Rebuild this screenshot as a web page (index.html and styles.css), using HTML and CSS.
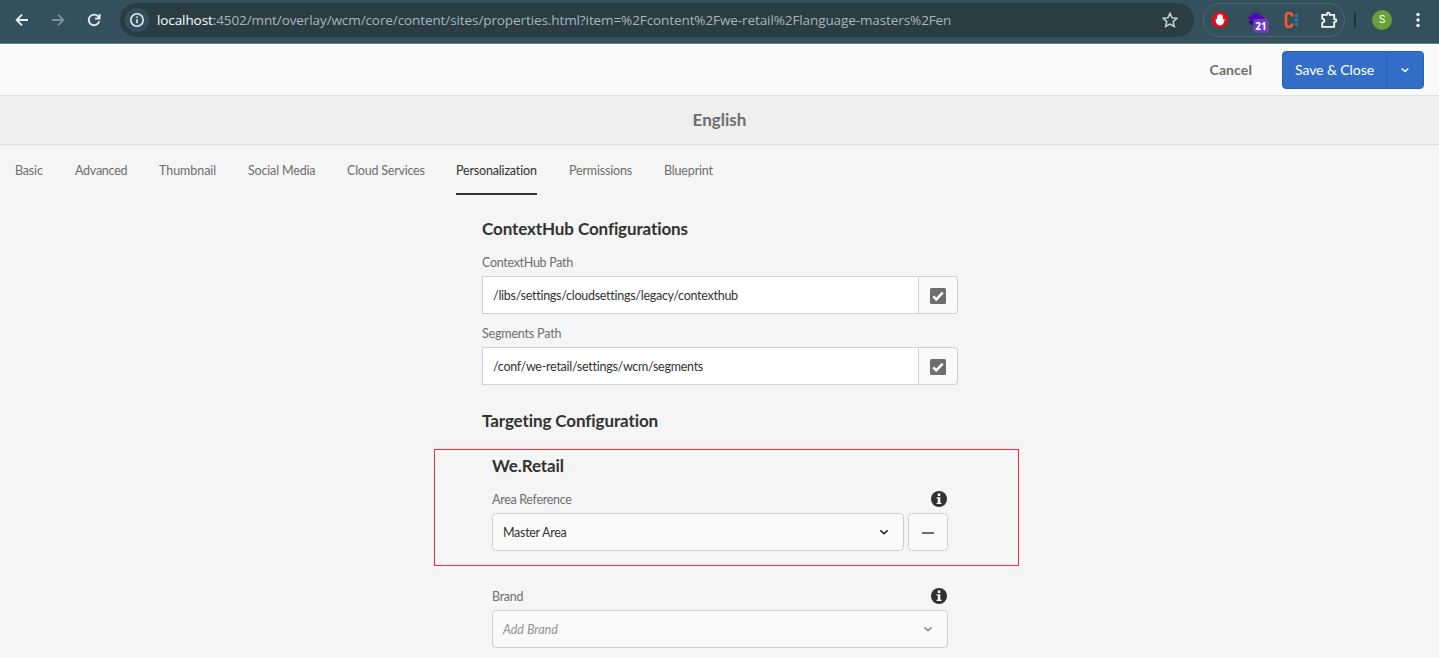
FILE: index.html
```html
<!DOCTYPE html>
<html lang="en">
<head>
<meta charset="utf-8">
<title>English - Properties</title>
<link rel="stylesheet" href="styles.css">
</head>
<body>
<div class="browser">
  <svg class="nav-icon" viewBox="0 0 16 16"><path d="M14 8H3M8 2.6 2.6 8 8 13.4"/></svg>
  <svg class="nav-icon dim" viewBox="0 0 16 16"><path d="M2 8h11M8 2.6 13.4 8 8 13.4"/></svg>
  <svg class="nav-icon" viewBox="0 0 16 16"><path d="M13.2 9.2A5.3 5.3 0 1 1 12 4.4l1.2 1.3M13.6 2v4.6H9"/></svg>
  <div class="address">
    <span class="site-info"><svg viewBox="0 0 16 16"><circle cx="8" cy="8" r="6.2"/><path d="M8 7.2v4M8 4.4v1.6"/></svg></span>
    <span class="url"><b>localhost</b>:4502/mnt/overlay/wcm/core/content/sites/properties.html?item=%2Fcontent%2Fwe-retail%2Flanguage-masters%2Fen</span>
    <svg class="star" viewBox="0 0 16 16"><path d="m8 1.3 2 4.5 4.9.5-3.7 3.3 1.1 4.9L8 12l-4.3 2.5 1.1-4.9L1.1 6.300l4.900-.5z"/></svg>
  </div>
  <div class="extensions">
    <svg class="ext-stop" viewBox="0 0 16 16"><path fill="#e40d13" d="M4.700 0h6.600L16 4.700v6.600L11.300 16H4.700L0 11.300V4.700z"/><path fill="#fff" d="M3.600 7.800c0-1 1.400-1 1.400 0V4c0-1 1.400-1 1.400 0v-.9c0-1.100 1.500-1.100 1.500 0V2.700c0-1 1.500-1 1.500 0v1c0-1 1.400-1 1.400 0v4.100c.6-1 1.900-1 1.800-.2-.4 2.800-1.400 5.900-4.200 5.900-2.700 0-4.800-1.700-4.800-5.700z"/></svg>
    <span class="ext-layer"><svg viewBox="0 0 18 16"><path fill="#290b6b" d="m1 10 8-4 8 4-8 6z"/><path fill="#4b0cb5" d="m9 0 8.500 6L9 12 .5 6z"/></svg><span class="badge">21</span></span>
    <svg class="ext-c" viewBox="0 0 16 16"><path d="M8 4.500V3.700Q8 1.200 5 1.200T2 3.800v8.400q0 2.600 3 2.600t3-2.500v-.8" fill="none" stroke="#f15a2b" stroke-width="2.600"/><path fill="#626c73" d="M11 2h3v3h-3zM11 11h3v3h-3z"/><circle cx="12.500" cy="8" r="1.800" fill="#1682e8"/></svg>
    <svg class="ext-puzzle" viewBox="0 0 18 18"><path d="M2.200 3.800H6.800Q6.700 1.600 8.200 1.600T9.700 3.800h4.500v4.300q2.200 0 2.200 1.500t-2.200 1.500v4.700H2.200v-4.100q2.200-.2 2.200-2T2.200 7.600z"/></svg>
  </div>
  <span class="separator"></span>
  <span class="avatar">S</span>
  <svg class="kebab" viewBox="0 0 4 16"><circle cx="2" cy="2.500" r="1.700"/><circle cx="2" cy="8" r="1.700"/><circle cx="2" cy="13.500" r="1.700"/></svg>
</div>

<header class="actions">
  <span class="cancel">Cancel</span>
  <div class="save">
    <span class="save-label"><span>Save &amp; Close</span></span>
    <span class="save-more"><svg class="chevron" viewBox="0 0 10 10"><path d="m1.700 3.500 3.300 3 3.300-3"/></svg></span>
  </div>
</header>
<div class="title"><span>English</span></div>

<nav class="tabs">
  <span class="tab t1">Basic</span>
  <span class="tab t2">Advanced</span>
  <span class="tab t3">Thumbnail</span>
  <span class="tab t4">Social Media</span>
  <span class="tab t5">Cloud Services</span>
  <span class="tab t6 active">Personalization</span>
  <span class="tab t7">Permissions</span>
  <span class="tab t8">Blueprint</span>
</nav>

<main class="form">
  <h2>ContextHub Configurations</h2>
  <label>ContextHub Path</label>
  <div class="path-field">
    <div class="path-value"><span>/libs/settings/cloudsettings/legacy/contexthub</span></div>
    <div class="path-pick"><svg viewBox="0 0 16 16"><rect width="16" height="16" rx="1.500"/><path d="m3.300 8.300 3 3L12.700 4.700"/></svg></div>
  </div>
  <label class="segments">Segments Path</label>
  <div class="path-field">
    <div class="path-value"><span>/conf/we-retail/settings/wcm/segments</span></div>
    <div class="path-pick"><svg viewBox="0 0 16 16"><rect width="16" height="16" rx="1.500"/><path d="m3.300 8.300 3 3L12.700 4.700"/></svg></div>
  </div>
  <h2 class="targeting">Targeting Configuration</h2>
  <section class="group">
    <h2>We.Retail</h2>
    <div class="label-row"><label>Area Reference</label>
      <svg class="info" viewBox="0 0 16 16"><circle cx="8" cy="8" r="8"/><path d="M6.800 2.500h2.500v2.400H6.800zM5.600 6.300h3.700v5.400h1.200V13H5.600v-1.300h1.200V7.600H5.600z"/></svg></div>
    <div class="select-row">
      <div class="select"><span>Master Area</span><svg class="chevron" viewBox="0 0 10 10"><path d="m1.300 3.300 3.700 3.400 3.700-3.400"/></svg></div>
      <div class="remove"><i></i></div>
    </div>
    <div class="label-row brand"><label>Brand</label>
      <svg class="info" viewBox="0 0 16 16"><circle cx="8" cy="8" r="8"/><path d="M6.800 2.500h2.500v2.400H6.800zM5.600 6.300h3.700v5.400h1.200V13H5.600v-1.300h1.200V7.600H5.600z"/></svg></div>
    <div class="select empty"><span>Add Brand</span><svg class="chevron" viewBox="0 0 10 10"><path d="m1.300 3.300 3.700 3.400 3.700-3.400"/></svg></div>
  </section>
</main>
<div class="highlight"></div>
</body>
</html>
```
FILE: styles.css
```css
* { box-sizing: border-box; }
body {
  margin: 0;
  height: 658px;
  overflow: hidden;
  position: relative;
  background: #f5f5f5;
  color: #323232;
  font-family: Lato, "Open Sans", sans-serif;
  font-size: 12.5px;
  font-variant-ligatures: none;
}
svg { display: block; flex: none; }

.browser {
  display: flex;
  align-items: center;
  height: 44px;
  padding: 0 0 4px 14px;
  background: #33505c;
  border-bottom: 1px solid #667b85;
}
.nav-icon {
  width: 16px;
  height: 16px;
  margin-right: 20px;
  fill: none;
  stroke: #e8f0f2;
  stroke-width: 1.8;
}
.nav-icon.dim { stroke: #7d929b; }
.address {
  display: flex;
  align-items: center;
  width: 1074px;
  height: 34px;
  margin: 1px 0 0 -2px;
  padding: 0 16px 0 5px;
  border-radius: 17px;
  background: #2a3d45;
}
.site-info {
  display: grid;
  place-items: center;
  width: 24px;
  height: 24px;
  border-radius: 50%;
  background: #33505c;
}
.site-info svg { width: 16px; height: 16px; fill: none; stroke: #e4ecef; stroke-width: 1.6; }
.url {
  flex: 1;
  margin-left: 8px;
  color: #a9b5ba;
  font: 13.5px/20px "Open Sans", sans-serif;
  letter-spacing: -0.095px;
  white-space: nowrap;
}
.url b { font-weight: 400; color: #fff; }
.star { width: 16px; height: 16px; fill: none; stroke: #c6d0d4; stroke-width: 1.5; }
.extensions {
  display: flex;
  align-items: center;
  width: 142px;
  height: 34px;
  margin: 1px 0 0 9px;
  padding-left: 8px;
  border: 1px solid #4c6873;
  border-radius: 17px;
}
.ext-stop { width: 16px; height: 16px; }
.ext-layer { position: relative; width: 18px; height: 16px; margin-left: 19px; }
.ext-layer svg { width: 18px; height: 16px; }
.badge {
  position: absolute;
  left: 6px;
  top: 7px;
  width: 16px;
  height: 14px;
  border-radius: 3px;
  background: #6d3bc4;
  color: #fff;
  font: 700 10px/14px "Open Sans", sans-serif;
  text-align: center;
}
.ext-c { width: 16px; height: 16px; margin-left: 19px; }
.ext-puzzle { width: 18px; height: 18px; margin-left: 20px; fill: none; stroke: #f2f6f7; stroke-width: 1.8; }
.separator { width: 2px; height: 16px; margin-left: 9px; background: #20343c; }
.avatar {
  width: 20px;
  height: 20px;
  margin-left: 16px;
  border-radius: 50%;
  background: #689f38;
  color: #fff;
  font: 10.5px/20px Roboto, sans-serif;
  text-align: center;
}
.kebab { width: 4px; height: 16px; margin-left: 24px; fill: #f2f6f7; }

.actions {
  display: flex;
  justify-content: flex-end;
  align-items: center;
  height: 52px;
  padding: 0 15px 0 0;
  background: #fafafa;
  border-bottom: 1px solid #e1e1e1;
  font-size: 14px;
}
.cancel { margin-right: 30px; color: #6e6e6e; font-weight: 700; letter-spacing: 0.1px; }
.save {
  display: flex;
  width: 142px;
  height: 38px;
  border: 1px solid #2564bd;
  border-radius: 4px;
  background: #326ec8;
  color: #fff;
}
.save-label { display: grid; place-items: center; width: 104px; border-right: 1px solid #2564bd; letter-spacing: -0.08px; }
.save-more { display: grid; place-items: center; flex: 1; }
.chevron { width: 10px; height: 10px; fill: none; stroke: currentColor; stroke-width: 1.6; }

.title {
  height: 49px;
  background: #efefef;
  border-bottom: 1px solid #e1e1e1;
  color: #6e6e6e;
  font-size: 17px;
  font-weight: 700;
  line-height: 47px;
  text-align: center;
}

.tabs { display: flex; gap: 32px; height: 50px; padding-left: 15px; color: #6e6e6e; letter-spacing: -0.17px; }
.tab { height: 50px; line-height: 51px; white-space: nowrap; }
.tab.active { color: #323232; border-bottom: 2px solid #323232; }
.t1 { width: 28px; }
.t2 { width: 52px; letter-spacing: -0.25px; }
.t3 { width: 57px; letter-spacing: -0.05px; }
.t4 { width: 67px; }
.t5 { width: 77px; letter-spacing: -0.22px; }
.t6 { width: 81px; }
.t7 { width: 63px; }

.form { width: 476px; margin-left: 482px; padding-top: 22px; }
h2 { margin: 0; font-size: 17px; font-weight: 700; line-height: 24px; letter-spacing: -0.1px; }
.form > h2 { position: relative; }
label { display: block; color: #6e6e6e; line-height: 20px; letter-spacing: -0.3px; white-space: nowrap; }
.segments { letter-spacing: -0.18px; }
h2 + label { margin-top: 12px; }
.path-field { display: flex; height: 38px; margin: 3px 0 10px; }
.path-value {
  width: 437px;
  padding-left: 10px;
  border: 1px solid #d0d0d0;
  background: #fff;
  line-height: 37px;
  letter-spacing: -0.27px;
}
.path-pick {
  display: grid;
  place-items: center;
  width: 39px;
  padding-top: 1px;
  border: 1px solid #d0d0d0;
  border-left: 0;
  border-radius: 0 4px 4px 0;
  background: #fafafa;
}
.path-pick svg { width: 16px; height: 16px; fill: #6e6e6e; }
.path-pick path { fill: none; stroke: #fff; stroke-width: 2.6; }
.targeting { margin-top: 24px; }
.group { padding: 21px 10px 0; }
.label-row { display: flex; align-items: center; justify-content: space-between; height: 20px; margin-top: 11px; }
.label-row label { padding-top: 1px; }
.info { width: 16px; height: 16px; margin-right: 1px; fill: #323232; }
.info path { fill: #fff; }
.select-row { display: flex; gap: 4px; margin-top: 4px; }
.select {
  display: flex;
  align-items: center;
  justify-content: space-between;
  flex: 1;
  height: 38px;
  padding: 0 14px 0 10px;
  border: 1px solid #d0d0d0;
  border-radius: 4px;
  background: #fafafa;
  letter-spacing: -0.3px;
}
.remove {
  display: grid;
  place-items: center;
  width: 40px;
  padding-top: 2px;
  border: 1px solid #d0d0d0;
  border-radius: 4px;
  background: #fafafa;
}
.remove i { width: 12px; height: 2px; background: #6e6e6e; }
.label-row.brand { margin-top: 35px; }
.select.empty { margin-top: 4px; color: #929292; letter-spacing: 0; }
.select.empty span { font-style: italic; }
.highlight {
  position: absolute;
  left: 434px;
  top: 449px;
  width: 585px;
  height: 117px;
  border: 1px solid #ed3237;
}
```
